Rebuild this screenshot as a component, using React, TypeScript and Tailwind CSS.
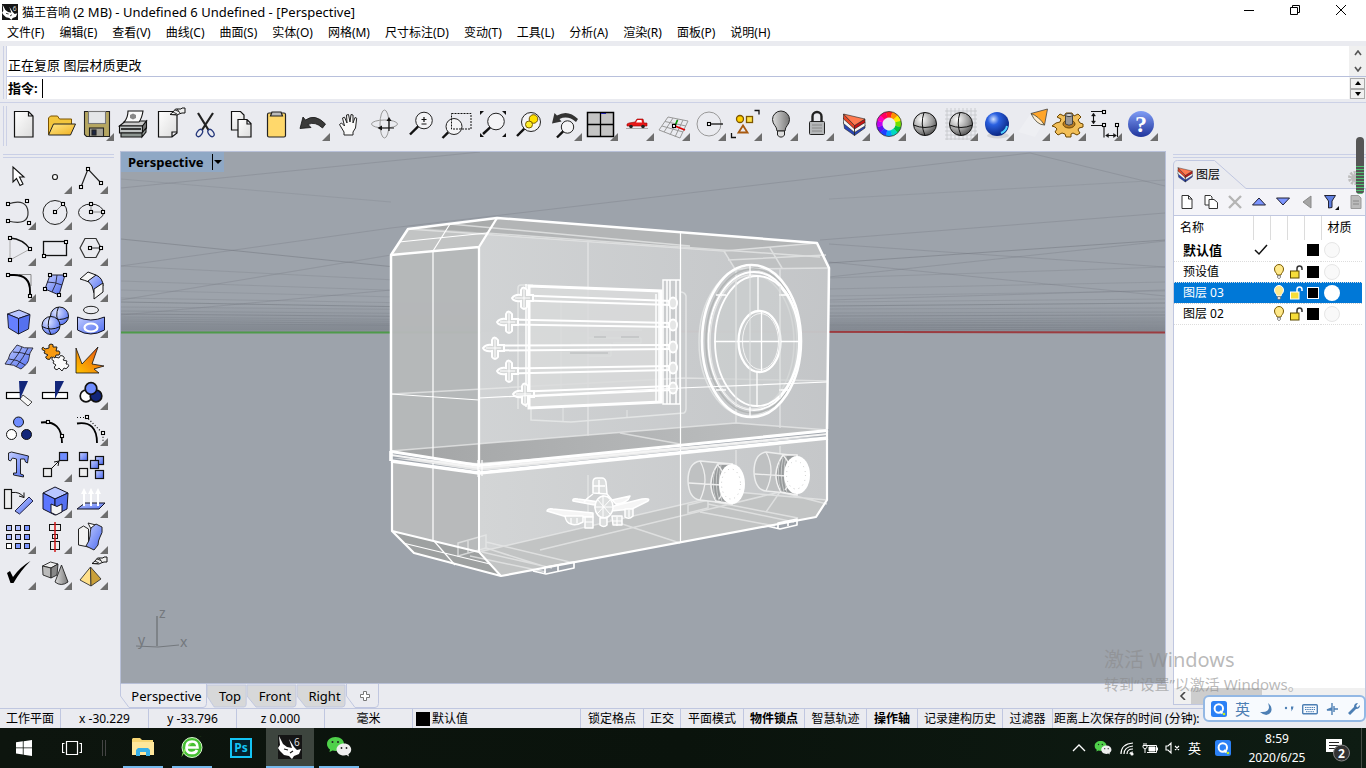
import React from "react";

const BLUE = "#6f8dff";
const NAVY = "#12267a";

type Glyph = { name: string; art: React.ReactNode; more?: boolean };

function Pt({ x, y }: { x: number; y: number }) {
  return <rect x={x - 1.5} y={y - 1.5} width="3" height="3" fill="#fff" stroke="#000" strokeWidth="1.1" />;
}

function HandMark({ x, y }: { x: number; y: number }) {
  return (
    <g transform={`translate(${x} ${y})`}>
      <path d="M0 6.500L3 4l2.500-3H11l1-1h3v5h-3L9 6 7 7z" fill="#eee" stroke="#111" strokeWidth="1" />
      <path d="M1 6.500h5M3 4l4 2M5 2l4 1.500M7 1l3 4" stroke="#222" strokeWidth=".9" fill="none" />
    </g>
  );
}

function Lens({ x, y, r, tx, ty }: { x: number; y: number; r: number; tx: number; ty: number }) {
  return (
    <g>
      <line x1={x - r * 0.7} y1={y + r * 0.7} x2={tx} y2={ty} stroke="#111" strokeWidth="2.4" />
      <circle cx={x} cy={y} r={r} fill="#f4f4f6" stroke="#222" strokeWidth="1" />
    </g>
  );
}

function Sphere({ x, y, r, fill }: { x: number; y: number; r: number; fill: string }) {
  return (
    <g fill="none" stroke="#111" strokeWidth="1">
      <circle cx={x} cy={y} r={r} fill={fill} />
      <path d={`M${x - r} ${y + 1}Q${x} ${y + 6} ${x + r} ${y + 1}M${x - 1} ${y - r}Q${x - 5} ${y} ${x} ${y + r}`} />
    </g>
  );
}

const wheelColors = ["#ff2020", "#ff9000", "#ffee00", "#70e000", "#00c040", "#00d8c0", "#00a0ff", "#2040ff", "#6010f0", "#c000f0", "#ff00c0", "#ff0060"];

const topTools: Glyph[] = [
  { name: "新建", art: <path d="M7.500 5.500h14l4.500 4.500v21H7.500zM21.500 5.500v4.500H26" fill="url(#paper)" stroke="#111" strokeWidth="1.2" /> },
  { name: "打开", art: <g stroke="#7a5200" strokeWidth="1"><path d="M5.500 28V12l2-2h7l2 3h12v5" fill="#f2c53d" /><path d="M5.500 29l5-11h22l-5 11z" fill="url(#gold)" stroke="#222" /></g> },
  { name: "保存", more: true, art: <g stroke="#222" strokeWidth="1.1"><path d="M5.500 5.500h25v25H7.500l-2-2z" fill="#b5a661" /><rect x="9.500" y="5.500" width="17" height="12" fill="#e4e6e8" stroke="#777" /><rect x="10.500" y="22" width="14" height="8.500" fill="#a5a398" /><rect x="13" y="24" width="4" height="5" fill="#1c2540" /></g> },
  { name: "打印", art: <g stroke="#111" strokeWidth="1.1"><path d="M4.500 20l6-5h21l-4 5z" fill="#ccc" /><path d="M9 16q4-4 4-11h15q-1 7-4 11z" fill="#fafafa" /><path d="M15 9l3-1.500 3 1.500v3l-3 1.500-3-1.500z" fill="#888" stroke="none" /><path d="M4.500 20h23v7h-23z" fill="#bfc3c3" /><path d="M27.500 20l4-5v7l-4 5z" fill="#777" /><path d="M6 27h21v4H6zM27 27l4-5v4l-4 5z" fill="#8c9490" /><path d="M6 23h20" strokeWidth="1.600" /></g> },
  { name: "属性", art: <g><path d="M7.500 5.500H26V27l-5 4H7.500zM26 26h-5v5" fill="url(#paper)" stroke="#111" strokeWidth="1.2" /><HandMark x={19} y={2} /></g> },
  { name: "剪切", art: <g fill="none"><path d="M11 7l10.500 17M26 7L15 24" stroke="#222" strokeWidth="2.200" /><ellipse cx="12.500" cy="27" rx="2.500" ry="4" transform="rotate(35 12.500 27)" stroke="#26387c" strokeWidth="1.300" /><ellipse cx="24" cy="27" rx="2.500" ry="4" transform="rotate(-35 24 27)" stroke="#26387c" strokeWidth="1.300" /></g> },
  { name: "复制", art: <g fill="url(#paper)" stroke="#111" strokeWidth="1.2"><path d="M8.500 5.500h9l3.500 3.500v15H8.500z" /><path d="M15 13.500h9l4 4V31H15zM24 13.500V18h4" /></g> },
  { name: "粘贴", art: <g stroke="#222" strokeWidth="1.200"><rect x="8.500" y="7" width="18" height="24" rx="1.500" fill="#ffd86b" /><path d="M13 6h9l1.500 4h-12z" fill="#bbb" /></g> },
  { name: "复原", more: true, art: <path d="M5 22.500L8 11l2.500 3Q20 7 30.500 18l-3 4Q20 15 13 18.500l3 3z" fill="#3a3a3a" stroke="#111" strokeWidth=".8" /> },
  { name: "平移", art: <path d="M13 29v-3L8.500 18.500l2-1.500 3 3L11.500 12l2-.8L16 17l-.5-8 2-.5L19 16l1-7.500 2 .5v8l2-5.500 1.700.7L24.500 22 22 26v3z" fill="#fafafa" stroke="#222" strokeWidth="1" /> },
  { name: "旋转", art: <g fill="none"><ellipse cx="17.500" cy="18" rx="13" ry="4" stroke="#999" /><ellipse cx="17.500" cy="18" rx="4.500" ry="14" stroke="#999" /><path d="M22 13v12M27 22H13" stroke="#111" strokeWidth="1.200" /><path d="M19.500 15l2.500-4 2.500 4zM15 19.500L10.500 22l4.500 2.500z" fill="#111" /></g> },
  { name: "缩放", art: <g><Lens x={21} y={14.500} r={8.300} tx={7} ty={28.500} /><path d="M18.500 13.500h5M21 11v5M18.500 18h5" stroke="#111" strokeWidth="1.200" /></g> },
  { name: "框选缩放", art: <g><Lens x={15} y={20.500} r={8} tx={3.500} ty={32} /><path d="M12.500 7.500h19.500v15.500h-19.500z" fill="none" stroke="#111" strokeDasharray="2 1" /></g> },
  { name: "缩放范围", art: <g><Lens x={21} y={15.500} r={8.300} tx={8} ty={28} /><path d="M5 5h4l-4 4zM31 5v4l-4-4zM5 31v-4l4 4zM31 31h-4l4-4z" fill="#111" /></g> },
  { name: "缩放选取", art: <g><Lens x={20} y={16} r={9.500} tx={6} ty={30} /><circle cx="22.500" cy="13" r="4.300" fill="#ffe000" stroke="#775c00" /><circle cx="18" cy="18.500" r="3.500" fill="#fff02a" stroke="#775c00" /></g> },
  { name: "复原视图", more: true, art: <g><Lens x={20.500} y={21} r={6.200} tx={10} ty={31.500} /><path d="M5 17.500L7.500 7l2.500 2.500Q21 3 31 13l-2 3Q21 9 12.500 13l2 2.500z" fill="#333" /></g> },
  { name: "四视图", more: true, art: <g><rect x="4.500" y="6.500" width="26" height="24" fill="#c4c4c4" stroke="#000" strokeWidth="1.500" /><path d="M17.500 6v25M4 18.500h27" stroke="#000" strokeWidth="1.300" /><path d="M18 7.500h5" stroke="#22a" /></g> },
  { name: "汽车视图", more: true, art: <g><path d="M7 22.500h22" stroke="#aaa" /><path d="M8 20v-2l2-1 6-1 2-3h6l1 4h3v3z" fill="#e81818" stroke="#900" strokeWidth=".6" /><path d="M18.500 14h4l.5 2.500h-6z" fill="#fff" /><circle cx="12" cy="20.500" r="1.800" fill="#222" /><circle cx="24" cy="20.500" r="1.800" fill="#222" /></g> },
  { name: "工作平面", more: true, art: <g fill="none" stroke="#999"><path d="M13 11l20 4-8 17L4 24zM10 15.500l21 4.500M7 20l21 6M18 12l-9 14M23 13l-8 16M28 14l-8 17" /><path d="M20 20l2.500-6" stroke="#0a9a0a" strokeWidth="1.700" /><path d="M20 20l10 4" stroke="#d00" strokeWidth="1.700" /><Pt x={19} y={20} /></g> },
  { name: "锁点", more: true, art: <g fill="none"><circle cx="18" cy="18" r="12" stroke="#999" /><path d="M18 18h14" stroke="#000" strokeWidth="1.200" /><Pt x={18} y={18} /></g> },
  { name: "选取", more: true, art: <g fill="none" stroke="#7d5600" strokeWidth="1.300"><circle cx="13" cy="13" r="3.500" fill="#ffd000" /><rect x="19.500" y="10.500" width="6" height="6" fill="#ffe24a" /><path d="M16 19.500l-4.500 7h9z" stroke="#a85a10" strokeWidth="1.800" /><path d="M27.500 4.500H32v4M4.500 27v4.500H9" stroke="#111" /></g> },
  { name: "隐藏", more: true, art: <g stroke="#222"><path d="M14 25c0-5-4.500-6-4.500-11.500a8.500 8.500 0 0117 0C26.500 19 22 20 22 25z" fill="url(#gray)" /><path d="M14.500 25h7v4l-2 2h-3l-2-2z" fill="#ddd" /></g> },
  { name: "锁定", more: true, art: <g stroke="#222"><path d="M13.500 16v-5.500a4.500 4.500 0 019 0V16" fill="none" strokeWidth="2.400" /><rect x="10.500" y="15.500" width="15" height="13" rx="1" fill="#b5b7b9" /><path d="M13 19h10M13 22h10M13 25h10" stroke="#888" /></g> },
  { name: "图层", more: true, art: <g stroke="#222" strokeWidth=".6"><path d="M8.500 16l11 10v3.500l-10-7zM19.500 26l10.500-7v3l-10.500 7.500z" fill="#2845b8" /><path d="M8.500 12l11 10v4.500l-11-9zM19.500 22L30 16v4l-10.500 6.500z" fill="#f4f4f4" /><path d="M8.500 8l11 11.500v3.500L8.500 13z" fill="#e84424" /><path d="M19.500 19.500L30 13v3.500L19.500 23z" fill="#c81414" /><path d="M8.500 8L30 13l-10.500 6.500z" fill="#ff7a50" /></g> },
  { name: "颜色", more: true, art: <g fill="none" strokeWidth="6">{wheelColors.map((c, i) => { const a = (i * 30 - 105) * Math.PI / 180; const b = a + 0.55; return <path key={c} stroke={c} d={`M${18 + 9.5 * Math.cos(a)} ${18 + 9.5 * Math.sin(a)}A9.500 9.500 0 0 1 ${18 + 9.5 * Math.cos(b)} ${18 + 9.5 * Math.sin(b)}`} />; })}<circle cx="18" cy="18" r="12.500" stroke="#333" strokeWidth=".8" /></g> },
  { name: "着色", art: <Sphere x={18} y={18} r={11.500} fill="url(#ball)" /> },
  { name: "着色全部", more: true, art: <g><path d="M2 5h32M2 9h32M2 13h32M2 17h32M2 21h32M2 25h32M2 29h32M2 33h32M4 2v32M8 2v32M12 2v32M16 2v32M20 2v32M24 2v32M28 2v32M32 2v32" stroke="#c4c5c9" strokeWidth=".8" /><Sphere x={18} y={18} r={11.500} fill="url(#ball)" /></g> },
  { name: "渲染", more: true, art: <g><ellipse cx="19" cy="29.500" rx="11" ry="3" fill="#d2d3d8" /><circle cx="18" cy="18" r="12" fill="url(#deep)" /><path d="M22 27q5-2 6-7" stroke="#4fd0ff" strokeWidth="2" fill="none" /></g> },
  { name: "灯光", more: true, art: <g><path d="M3 26L16 7l10 14-6 10z" fill="#fff" opacity=".2" /><path d="M16 7.500L32.500 3l-3 16z" fill="#ffa52a" stroke="#444" strokeWidth=".8" /><path d="M16 7.500q8 3 13.500 11.500-8 0-13.500-11.500z" fill="#ffeccc" stroke="#443" strokeWidth=".8" /></g> },
  { name: "选项", more: true, art: <g stroke="#6d4600" strokeWidth="1"><path d="M5 17l4-1 1-3-4-2 3-3 4 2 2-3h6l2 3 4-2 3 3-3 3 2 3 3 1v3l-4 1-1 2 2 3-3 2-4-2-2 1v3h-5l-1-3-3-1-4 2-3-3 2-3-2-2-3-1z" fill="#f2bf58" /><ellipse cx="18" cy="18" rx="6" ry="4" fill="#b87c22" /><path d="M14.500 9v9q3.500 2.500 7 0V9z" fill="#999" stroke="#444" /><ellipse cx="18" cy="9" rx="3.500" ry="1.600" fill="#ccc" stroke="#444" /></g> },
  { name: "尺寸标注", more: true, art: <g fill="none" stroke="#111" strokeWidth="1.100"><path d="M4 5.500h13M4 19.500h13v12M30.500 19v12M6.500 8v9M19 29.500h10" /><path d="M4.500 10l2-3 2 3zM4.500 15l2 3 2-3zM21.500 27.500l-3 2 3 2zM26.500 27.500l3 2-3 2z" fill="#111" strokeWidth=".4" /><Pt x={17} y={6} /><Pt x={17} y={19} /><Pt x={30} y={19} /></g> },
  { name: "说明", more: true, art: <g><circle cx="18" cy="18" r="13" fill="url(#help)" /><text x="18" y="26" textAnchor="middle" fontFamily="Liberation Serif, serif" fontWeight="700" fontSize="24" fill="#fff">?</text></g> },
];

const sideTools: Glyph[] = [
  { name: "选取", art: <path d="M12 8v15l3.500-3.500 3.500 7 3-1.500-3.500-7H23z" fill="#fff" stroke="#111" strokeWidth="1.100" /> },
  { name: "点", more: true, art: <circle cx="18" cy="18" r="2.500" fill="#fff" stroke="#222" strokeWidth="1.200" /> },
  { name: "多重直线", more: true, art: <g><path d="M8 28l7-18 13 14" fill="none" stroke="#222" strokeWidth="1.200" /><Pt x={8} y={28} /><Pt x={15} y={10} /><Pt x={28} y={24} /></g> },
  { name: "曲线", more: true, art: <g><path d="M7 9Q26 3 27 17T7 26" fill="none" stroke="#333" strokeWidth="1.200" /><Pt x={7} y={9} /><Pt x={26} y={6} /><Pt x={28} y={28} /><Pt x={7} y={26} /></g> },
  { name: "圆", more: true, art: <g><circle cx="18" cy="17.500" r="12" fill="none" stroke="#222" /><path d="M18 17l8-8" stroke="#888" /><Pt x={18} y={17} /><Pt x={26} y={9} /></g> },
  { name: "椭圆", more: true, art: <g><ellipse cx="18" cy="17.500" rx="12.500" ry="8.500" fill="none" stroke="#222" /><path d="M18 9v8h12" fill="none" stroke="#888" /><Pt x={18} y={17} /><Pt x={18} y={9} /><Pt x={30} y={17} /></g> },
  { name: "圆弧", more: true, art: <g fill="none"><path d="M9 7v22l20-11" stroke="#aaa" /><path d="M9 7q13 1 20 11" stroke="#111" strokeWidth="1.300" /><Pt x={9} y={7} /><Pt x={29} y={18} /><Pt x={9} y={29} /></g> },
  { name: "矩形", more: true, art: <g><rect x="6.500" y="10.500" width="23" height="14" fill="none" stroke="#111" strokeWidth="1.300" /><Pt x={29} y={11} /><Pt x={7} y={25} /></g> },
  { name: "多边形", more: true, art: <g><path d="M12 7.500h11L28 17l-5 9.500H12L7 17zM17 17h11" fill="none" stroke="#333" strokeWidth="1.200" /><Pt x={17} y={17} /><Pt x={28} y={17} /></g> },
  { name: "圆角", more: true, art: <g fill="none"><path d="M18 7.500h12V19" stroke="#888" /><path d="M7 8h6q16 0 16 16v5" stroke="#000" strokeWidth="1.900" /><Pt x={7} y={8} /><Pt x={29} y={29} /></g> },
  { name: "曲面", more: true, art: <g><path d="M13 8h15l-6 20-14-6z" fill="url(#blue)" stroke="#223" /><path d="M20 8q0 9-5 17M10 15q8 0 15 3" fill="none" stroke="#223" strokeWidth=".9" /><Pt x={13} y={8} /><Pt x={28} y={8} /><Pt x={22} y={28} /><Pt x={8} y={22} /></g> },
  { name: "曲面圆角", more: true, art: <g stroke="#111" strokeWidth="1"><path d="M7 12l8-7 8 3-7 7q-5-2-9-3z" fill="#f6f6f6" /><path d="M23 8q7 3 7 11l-9 7q-1-8-6-12z" fill="url(#blue)" /><path d="M21 22l9-6v9l-9 7z" fill="#f6f6f6" /></g> },
  { name: "立方体", more: true, art: <g stroke="#112" strokeWidth=".9"><path d="M6.500 11L18 7l11 4.500-11.500 4z" fill="#b9c6ff" /><path d="M6.500 11l11 4.500V31L7.500 25z" fill="#6680ff" /><path d="M17.500 15.500L29 11.500 27.500 26l-10 5z" fill="#5571ee" /></g> },
  { name: "布尔", more: true, art: <g><Sphere x={22.500} y={13} r={9} fill="url(#blueball)" /><Sphere x={14} y={22.500} r={9} fill="url(#blueball)" /></g> },
  { name: "投影", more: true, art: <g><ellipse cx="18" cy="7" rx="7.500" ry="3.700" fill="none" stroke="#222" /><path d="M4.500 14q13 6 27 0v13q-14 8-27 0z" fill="url(#blue)" stroke="#112" /><ellipse cx="18" cy="24.500" rx="6.500" ry="4" fill="none" stroke="#fff" strokeWidth="2.200" /></g> },
  { name: "网格", more: true, art: <g stroke="#223" strokeWidth=".9"><path d="M16 6q7 4 16 3-4 5-4 10t-8 11q-7-5-16-5 4-5 5-10z" fill="url(#blue)" /><path d="M21 8q-3 7-12 18M27 9q-4 9-12 19M12 13q8 0 17 3M8 20q8 0 16 6" fill="none" /></g> },
  { name: "组合", art: <g strokeWidth="1" stroke="#222"><path d="M8 10l4-1q-1-4 2-4t2 3l4 0-1 4q4-1 4 2t-4 2l-1 3-4-1q-1 4-4 2t1-4l-4-2 1-2q-4-1-3-3t3 1z" fill="#f79a10" /><path d="M18 18l4 1q1-4 4-2t0 4l4 1-1 3q4 0 2 3t-4 1l-2 3-3-3q-2 3-4 1t1-4l-3-2 1-2q-3-1-2-3t3 0z" fill="#fbfbfb" /></g> },
  { name: "炸开", art: <path d="M3 34V9L9 25 25 8l-6 17 12 2-10 3 5 4z" fill="url(#fire)" stroke="#111" strokeWidth=".8" /> },
  { name: "修剪", art: <g><rect x="5.500" y="17.500" width="14" height="6" fill="#fff" stroke="#000" strokeWidth="1.200" /><path d="M22 20l9 7-4 4-8-7z" fill="#f7f7f7" stroke="#444" /><path d="M18 6h9l-8 18z" fill={NAVY} /></g> },
  { name: "分割", art: <g><rect x="5.500" y="17.500" width="25" height="6" fill="#fff" stroke="#000" strokeWidth="1.200" /><path d="M18 6h9l-9 18z" fill={NAVY} /></g> },
  { name: "群组", more: true, art: <g stroke="#111" strokeWidth="1.700"><circle cx="13" cy="21" r="5.800" fill="#fff" /><circle cx="23" cy="21" r="5.800" fill={NAVY} /><circle cx="18" cy="13.500" r="5.800" fill={BLUE} /></g> },
  { name: "解散群组", art: <g stroke="#111" strokeWidth="1"><circle cx="17.500" cy="11" r="5" fill={BLUE} /><circle cx="10.500" cy="23.500" r="5" fill="#fff" /><circle cx="25.500" cy="23.500" r="5" fill={NAVY} /></g> },
  { name: "编辑点", art: <g><path d="M4 11.500Q25 9 25 32" fill="none" stroke="#000" strokeWidth="1.800" /><Pt x={11} y={11} /><Pt x={25} y={25} /></g> },
  { name: "控制点", more: true, art: <g><path d="M4 12.500q20-3 20 19.500" fill="none" stroke="#000" strokeWidth="1.800" /><path d="M4 6.500h10l16 16v9" fill="none" stroke="#111" strokeDasharray="1 2" strokeWidth="1.200" /><Pt x={14} y={6} /><Pt x={30} y={22} /></g> },
  { name: "文字", art: <g stroke="#111" strokeWidth=".9"><path d="M7.500 6l3-1 17 4-1 7-2-1-1-3h-4v15l3 1v2l-10-2v-2l3 0V12l-4-1-2 3-2-1z" fill="url(#blue)" /></g> },
  { name: "移动", more: true, art: <g stroke="#111" strokeWidth="1.200"><rect x="22.500" y="5.500" width="8" height="8" fill={BLUE} /><rect x="6.500" y="21.500" width="8" height="8" fill="#eee" /><path d="M15 21l7-7m-5 1l5-1-1 5" fill="none" strokeWidth="1" /></g> },
  { name: "阵列复制", art: <g stroke="#111" strokeWidth="1.200" fill="url(#blue)"><rect x="6.500" y="5.500" width="8" height="8" /><rect x="22.500" y="9.500" width="8" height="8" /><rect x="17.500" y="13.500" width="8" height="8" /><rect x="6.500" y="21.500" width="8" height="8" fill="#eee" /><rect x="22.500" y="23.500" width="8" height="8" /></g> },
  { name: "旋转", art: <g stroke="#111"><rect x="3.500" y="6.500" width="7" height="19" fill="#eee" strokeWidth="1.200" /><path d="M11 9.500q8-1 12 5m-5-1.500l5 1.500v-5" fill="none" /><path d="M14 28l14-14 4 4-13.500 13z" fill="url(#blue)" stroke="#224" /></g> },
  { name: "实体", more: true, art: <g stroke="#112" strokeWidth="1"><path d="M6 10l12-6 13 6-13 6z" fill="#b9c6ff" /><path d="M6 10l12 6v16L6 26z" fill="#5b76ff" /><path d="M18 16l13-6-1 16-12 6z" fill="#5570f0" /><path d="M14 21l6 2.500 5-2.500v8l-6 3-5-2.500z" fill="#f4f4f4" /></g> },
  { name: "拉伸", more: true, art: <g><path d="M4 26l8-6h20l-6 6z" fill="url(#blue)" stroke="#112" /><path d="M11 23V8M18 23V8M25 23V8" stroke="#fff" strokeWidth="2" /><path d="M8 11l3-6 3 6zM15 11l3-6 3 6zM22 11l3-6 3 6z" fill="#fff" /></g> },
  { name: "矩形阵列", more: true, art: <g stroke="#111">{[0, 1, 2].flatMap((r) => [0, 1, 2].map((c) => <rect key={`${r}${c}`} x={5.5 + 9 * c} y={6.5 + 9 * r} width="5" height="5" fill={r === 2 && c === 0 ? "#fff" : r === 2 || c === 2 ? "#7c95ff" : "#aebdff"} />))}</g> },
  { name: "对齐", more: true, art: <g fill="#eee" stroke="#111"><rect x="12.500" y="5.500" width="11" height="6" /><rect x="15.500" y="15.500" width="5" height="4" /><rect x="13.500" y="22.500" width="9" height="8" /><path d="M18 3v30" stroke="#d01515" strokeWidth="1.500" /></g> },
  { name: "弯曲", more: true, art: <g stroke="#222" strokeWidth="1"><path d="M5.500 10l5-3 5 3v18l-10-2z" fill="#f2f2f2" /><path d="M15 4l8 2-5 4z" fill="#fff" /><path d="M18 9l5-4 6 3q1 6-2 10-2 4-2 8l-4 5-8-4q4-6 4-10 0-4 1-8z" fill="url(#blue)" /></g> },
  { name: "检查", more: true, art: <path d="M6 18l3-2 3 6Q19 12 29.500 6 20 15 12.500 28h-3z" fill="#000" /> },
  { name: "基本几何体", more: true, art: <g stroke="#222" strokeWidth=".9"><path d="M5.500 11l8-4 7.500 2-7 4z" fill="#eee" /><path d="M5.500 11l8.500 2v10l-8-3z" fill="#bbb" /><path d="M14 13l7-4-1 11-6 3z" fill="#888" /><path d="M24.500 10L18 27q6 5 13 0z" fill="url(#gray)" /></g> },
  { name: "棱锥", more: true, art: <g><path d="M17.500 12L7 25l11 6z" fill="#ffe08a" stroke="#333" strokeWidth=".9" /><path d="M17.500 12L28 24l-10 7z" fill="#caa03a" stroke="#333" strokeWidth=".9" /><HandMark x={19} y={2} /></g> },
];

function ToolButton({ g }: { g: Glyph }) {
  return (
    <button type="button" aria-label={g.name} className="block size-9 shrink-0">
      <svg viewBox="0 0 36 36" className="size-9" aria-hidden="true">
        {g.art}
        {g.more && <path d="M27 35h8v-8z" fill="#6e6e6e" />}
      </svg>
    </button>
  );
}

function Defs() {
  return (
    <svg className="absolute size-0" aria-hidden="true">
      <defs>
        <linearGradient id="paper" x1="0" y1="0" x2="1" y2="1"><stop offset="0" stopColor="#fff" /><stop offset="1" stopColor="#dcdcdc" /></linearGradient>
        <linearGradient id="gold" x1="0" y1="0" x2="1" y2="1"><stop offset="0" stopColor="#ffe98a" /><stop offset="1" stopColor="#f0b020" /></linearGradient>
        <linearGradient id="gray" x1="0" y1="0" x2="1" y2="0"><stop offset="0" stopColor="#ddd" /><stop offset="1" stopColor="#777" /></linearGradient>
        <linearGradient id="blue" x1="0" y1="0" x2="1" y2="1"><stop offset="0" stopColor="#c3ceff" /><stop offset="1" stopColor="#4c6af0" /></linearGradient>
        <linearGradient id="fire" x1="0" y1="1" x2="1" y2="0"><stop offset="0" stopColor="#ffc400" /><stop offset="1" stopColor="#e84a10" /></linearGradient>
        <linearGradient id="help" x1="0" y1="0" x2="0" y2="1"><stop offset="0" stopColor="#7f9cf5" /><stop offset="1" stopColor="#20359c" /></linearGradient>
        <radialGradient id="ball" cx=".35" cy=".3" r=".8"><stop offset="0" stopColor="#fff" /><stop offset=".6" stopColor="#9a9a9a" /><stop offset="1" stopColor="#444" /></radialGradient>
        <radialGradient id="blueball" cx=".35" cy=".3" r=".8"><stop offset="0" stopColor="#dfe6ff" /><stop offset="1" stopColor="#4c6af0" /></radialGradient>
        <radialGradient id="deep" cx=".35" cy=".3" r=".8"><stop offset="0" stopColor="#cfe0ff" /><stop offset=".3" stopColor="#2a60e0" /><stop offset="1" stopColor="#041a70" /></radialGradient>
      </defs>
    </svg>
  );
}

function RhinoMark({ className }: { className: string }) {
  return (
    <svg viewBox="0 0 24 24" className={className} aria-hidden="true">
      <rect width="24" height="24" fill="#151515" />
      <path d="M1 1l4 8 4 3 5 1-3-9 5 8 3 3 4-1-2 5-5 2-2 3-3-3-5-1-4-4-2-3 2-3z" fill="#fff" />
      <path d="M6 14l4 1M12 18l3-2" stroke="#151515" strokeWidth="1.200" />
      <text x="16" y="11" fontSize="10" fontFamily="Noto Sans, sans-serif" fill="#ddd">6</text>
    </svg>
  );
}

function WeChat({ className }: { className: string }) {
  return (
    <svg viewBox="0 0 26 22" className={className} aria-hidden="true">
      <path d="M9.500 1C4.500 1 1 4 1 8c0 2.300 1.200 4.200 3 5.500L3.500 16l3-1.500c1 .3 2 .5 3 .5 5 0 8.500-3 8.500-7s-3.500-7-8.500-7z" fill="#4fd04a" />
      <path d="M18 7.500c-4.300 0-7.500 2.700-7.500 6s3.200 6 7.500 6c.8 0 1.700-.1 2.500-.4L23 20.500l-.6-2.300c1.800-1.100 2.800-2.800 2.800-4.700 0-3.300-3-6-7.200-6z" fill="#eee" />
      <g fill="#222"><circle cx="6.500" cy="6" r="1" /><circle cx="12" cy="6" r="1" /><circle cx="15.500" cy="12" r=".9" /><circle cx="20.500" cy="12" r=".9" /></g>
    </svg>
  );
}

function QMark({ className }: { className: string }) {
  return (
    <svg viewBox="0 0 16 16" className={className} aria-hidden="true">
      <rect width="16" height="16" rx="2.500" fill="#2b80f5" />
      <circle cx="7.800" cy="7.500" r="4.200" fill="none" stroke="#fff" strokeWidth="2" />
      <path d="M9 10l2.500 2.500" stroke="#fff" strokeWidth="1.800" />
      <circle cx="13" cy="13" r="1.300" fill="#c5f020" />
    </svg>
  );
}

const gridRows: [number, number, number][] = [
  [179, 189, 0.25], [239, 251, 0.6], [266, 272, 0.3], [281, 285, 0.3], [290, 293, 0.25], [298, 300, 0.3], [302, 304, 0.65],
  [307, 308, 0.3], [311, 312, 0.35], [314, 315, 0.6], [317, 318, 0.35], [319, 320, 0.35], [321, 322, 0.5], [323, 324, 0.4], [325, 325, 0.5], [327, 327, 0.6], [329, 329, 0.6],
];

const strings = [
  { x: 524, y: 298, e: 303 },
  { x: 509, y: 322, e: 325 },
  { x: 495, y: 348, e: 347 },
  { x: 509, y: 371, e: 368 },
  { x: 525, y: 394, e: 388 },
];

const knobs = [
  { x: 732, y: 484, b: 700, ry: 20 },
  { x: 797, y: 475, b: 766, ry: 19 },
];

function Scene() {
  return (
    <svg viewBox="121 152 1044 531" preserveAspectRatio="xMidYMid slice" className="absolute inset-0 size-full" aria-label="Perspective 视图">
      <defs>
        <linearGradient id="haze" x1="0" y1="0" x2="0" y2="1"><stop offset="0" stopColor="#80868f" stopOpacity="0" /><stop offset="1" stopColor="#777d86" stopOpacity=".6" /></linearGradient>
        <linearGradient id="front" x1="0" y1="0" x2="1" y2="0"><stop offset="0" stopColor="#d3d5d6" /><stop offset="1" stopColor="#c5c7c9" /></linearGradient>
        <linearGradient id="shelf" x1="0" y1="0" x2="1" y2="0"><stop offset="0" stopColor="#a2a4a5" /><stop offset="1" stopColor="#c0c2c3" /></linearGradient>
      </defs>
      <rect x="121" y="152" width="1044" height="531" fill="#9da3ab" />
      <g fill="none" stroke="#70757d" strokeWidth="1">
        {gridRows.map(([a, b, o], i) => <path key={i} opacity={o * 0.8} d={`M121 ${a}L391 ${b + (b - a) * 1.3}M829 ${b + (b - a)}L1165 ${a + 1}`} />)}
        <path opacity=".3" d="M121 266L391 228L1030 153L1165 186M121 188L480 152M1165 213L820 240M121 300L391 255M829 277L1165 241M121 315L391 290M829 262L1165 296M829 300L1165 290M829 244L1165 267" />
      </g>
      <path d="M121 302h1044v30H121z" fill="url(#haze)" />
      <path d="M121 332.500h360" stroke="#4e9a4a" strokeWidth="2" />
      <path d="M680 331.500l485 1" stroke="#9b3c40" strokeWidth="2" />

      <g strokeLinejoin="round">
        <path d="M479 247l18-29 320 25 12 25-1 161-349 35z" fill="url(#front)" fillOpacity=".96" />
        <path d="M408 229l89-11 320 25-93 8z" fill="#b3b5b6" />
        <path d="M391 255l88-8v217l-88-13z" fill="#b6b8b9" fillOpacity=".96" />
        <path d="M391 255l17-26 89-11-18 29z" fill="#c2c4c4" />
        <path d="M420 228l77-10-8 15z" fill="#a9abab" />
        <path d="M724 251l93-8 12 25-94 1z" fill="#bfc1c2" />
        <path d="M391 451l345-28 92 7-349 34z" fill="url(#shelf)" />
        <path d="M392 462l87 12v78l-87-21z" fill="#b8babb" />
        <path d="M479 474l348-36v62l-11 17-315 59-22-24z" fill="url(#front)" />
        <path d="M392 531l87 21 22 24-87-23z" fill="#9ea1a1" />
        <path d="M479 552l257-60 91 8-11 17-315 59z" fill="#c2c4c4" />
        <path d="M393 458l86 13 348-35-349 27z" fill="#e6e7e7" />
      </g>

      <g fill="none" stroke="#e8e9e9" strokeWidth="1.500" opacity=".75">
        <path d="M408 229l316 22 93-8M724 251l11 18 94-1M728 260l98-5M770 248l12 20M736 269v154M780 268v160M588 241v195M588 475v45" />
        <path d="M391 394l293-16 144 3M450 224l240 22M486 233l334 24M391 451l345-28 92 7M620 433l60 11" />
        <path d="M540 550l240-58 47 12M479 552l257-60 91 8M610 520l70 23M736 450v42M780 446v46l-14 20" />
        <path d="M458 543l28-8v13l-28 8zM468 541v12M486 542l88 21M486 548l60 19M470 556l76 16M482 552l70 16" />
        <path d="M688 505l20-5v8l-20 5zM708 504l86 18M700 512l75 14M715 502l83 16" />
      </g>

      <g fill="none" stroke="#e3e5e5" strokeWidth="1.500">
        <path d="M518 409V288q0-3 3-3h12M531 409v11l40 2 113-9q2-1 2-4V296q-1-4-6-4" />
        <path d="M563 408v14M627 410v8M561 300v100M571 344h40v12h-22M588 338h53v5h-28M600 330h42" strokeWidth="1" />
      </g>
      <path d="M529 288l132 4v110l-132 7z" fill="#d9dbdb" fillOpacity=".8" />
      <path d="M570 353h38M621 337h18M594 337h12" stroke="#b4b7b8" strokeWidth="1" />
      <g fill="none" stroke="#fff">
        <path d="M529 286l132 5v111l-132 6z" strokeWidth="3" />
        <path d="M526 284v123M656 294v107M659 292v109" strokeWidth="1.500" />
        <path d="M663 280h17v124h-17zM667 280v124M670 280v124M676 280v124" strokeWidth="1.500" />
        {strings.map((s) => (
          <g key={s.y}>
            <path d={`M${s.x} ${s.y - 2.5}L672 ${s.e - 2}M${s.x} ${s.y + 2.5}L672 ${s.e + 2}`} strokeWidth="2" />
            <ellipse cx="673" cy={s.e} rx="4" ry="5.500" strokeWidth="2" fill="#e5e6e6" />
            <path d={`M${s.x - 12} ${s.y}q3-4 9-3v-5q2-5 6 0v5h6v6h-6v6q-3 4-6 0v-6q-7 1-9-3z`} fill="#d5d7d7" strokeWidth="2" />
            <path d={`M${s.x} ${s.y - 10}v20M${s.x - 9} ${s.y}h15`} strokeWidth="1" />
          </g>
        ))}
      </g>

      <g fill="none">
        <ellipse cx="748" cy="342" rx="49" ry="74" stroke="#dfe1e1" strokeWidth="1.500" />
        <ellipse cx="753" cy="341" rx="47" ry="72" stroke="#b2b5b5" strokeWidth="1.500" />
        <ellipse cx="751.500" cy="341" rx="49.500" ry="76" stroke="#fff" strokeWidth="2.600" />
        <ellipse cx="754" cy="341" rx="45.500" ry="69" stroke="#fff" strokeWidth="2" />
        <ellipse cx="752" cy="342" rx="42" ry="67" stroke="#e4e5e5" strokeWidth="1.500" />
        <ellipse cx="757" cy="341" rx="42" ry="65" stroke="#fff" strokeWidth="1.800" fill="#ccd0d0" fillOpacity=".65" />
        <ellipse cx="759.500" cy="341.500" rx="21" ry="30.500" stroke="#fff" strokeWidth="2.300" />
        <ellipse cx="760.500" cy="341.500" rx="18" ry="28" stroke="#f5f5f5" strokeWidth="1" />
        <path d="M714 341.500h86M761.500 311v61M758 276v35M757 372v35M750 266v10M750 407v10M716 295h10M779 295h10M716 390h10M779 390h10" stroke="#fff" strokeWidth="1.300" />
        <path d="M750 276v131M736 282v118M780 286v112" stroke="#e3e5e5" strokeWidth="1" />
      </g>

      <g fill="none" stroke="#fff" strokeLinejoin="round">
        <path d="M391 451V255l17-26 89-11 320 25 12 25-2 161" strokeWidth="2.500" />
        <path d="M391 255l88-8 18-29M479 247v217" strokeWidth="2.300" />
        <path d="M399 242l88-9M433 251l17-27M433 251v206M391 394l88 6M479 398l201-10 147-6M680.500 232v311" strokeWidth="1.200" />
        <path d="M391 451.500l88 14 349-35" strokeWidth="3" />
        <path d="M391 455l88 13 349-34" strokeWidth="2" stroke="#f4f4f4" />
        <path d="M391 461l88 12 349-35M391 451v10" strokeWidth="3.600" />
        <path d="M392 461v70l22 22 87 23 315-59 11-17v-70" strokeWidth="2.200" />
        <path d="M392 531l87 21 22 24M479 470v82" strokeWidth="2" />
        <path d="M403 543l87 21M434 541l21 24M433 463v78M478 460v17M482 460v16" strokeWidth="1.200" />
        <path d="M533 571l13 3 28-6v-6l-29 5v6M558 566v5M767 526l13 3 17-4v-6l-19 4v5M788 522v4" strokeWidth="1.700" />
      </g>

      {knobs.map((k) => (
        <g key={k.b}>
          <path d={`M${k.b} ${k.y - 23}L${k.x} ${k.y - k.ry}v${2 * k.ry}L${k.b} ${k.y + 16}q-11-1-12-19 0-18 12-20z`} fill="#bfc1c2" stroke="#eceded" strokeWidth="1.500" />
          <path d={`M${k.x - 14} ${k.y - 20}h14v40l-16-3q-11-18 2-37z`} fill="#989b9c" stroke="#f2f2f2" strokeWidth="1.500" />
          <path d={`M${k.x - 17} ${k.y - 14}q-4 14 1 30M${k.x - 14} ${k.y - 17}q-4 16 1 34M${k.x - 11} ${k.y - 19}q-4 17 1 37`} fill="none" stroke="#c9cbcb" strokeWidth="1" />
          <path d={`M${k.b - 11} ${k.y - 1}l32 2M${k.b} ${k.y - 23}q10 18 0 39M${k.b + 17} ${k.y - 20}q16 18 2 35`} fill="none" stroke="#eee" strokeWidth="1.300" />
          <ellipse cx={k.x} cy={k.y} rx="13" ry={k.ry} fill="#fff" />
          <ellipse cx={k.x - 1} cy={k.y} rx="9.500" ry={k.ry - 5} fill="none" stroke="#c9caca" strokeWidth="1" strokeDasharray="1 4" />
        </g>
      ))}

      <g stroke="#fff" fill="#dcdede" strokeLinejoin="round" strokeWidth="1.500">
        <path d="M593 493v-11q0-4 4-4h5q3 0 4 4l1 12zM599 480v13M593 486h12" />
        <path d="M547 511q1-3 6-2l40 4v4h-26zM573 501q-1-3 5-2l22 3v4zM612 500l18-4q-2 7-14 8zM610 507l32-8q9-1 6 2l-16 8-21 2z" fill="#f5f5f5" />
        <path d="M593 494q-6 4-9 8M607 494l5 6" fill="none" />
        <ellipse cx="604" cy="507" rx="9" ry="11" />
        <path d="M594 507h19M603 495v22M597 499l13 15M611 499l-14 15" fill="none" strokeWidth="1" />
        <path d="M565 516h18v6q-7 4-12 2-5-1-6-8zM585 517h8v11h-8zM600 518h7v7q-3 3-7 0zM612 516h10v9h-9zM625 509h8v7q-4 4-8 1z" />
        <path d="M571 518v6M577 518v5M585 522h8M613 521h9M617 517v9M629 510v7" fill="none" strokeWidth="1.200" />
      </g>

      <g stroke="#74787d" strokeWidth="1.500" fill="none"><path d="M157 616v30" /><path d="M136 646l22 1 21-2" strokeWidth="1" /></g>
      <g fill="#74787d" fontFamily="Noto Sans, sans-serif" fontSize="14"><text x="159" y="618">z</text><text x="138" y="645">y</text><text x="180" y="647">x</text></g>
    </svg>
  );
}

const menus = ["文件(F)", "编辑(E)", "查看(V)", "曲线(C)", "曲面(S)", "实体(O)", "网格(M)", "尺寸标注(D)", "变动(T)", "工具(L)", "分析(A)", "渲染(R)", "面板(P)", "说明(H)"];

const layers = [
  { name: "默认值", current: true, selected: false },
  { name: "预设值", current: false, selected: false },
  { name: "图层 03", current: false, selected: true },
  { name: "图层 02", current: false, selected: false },
];

function LayerBulb({ light }: { light: boolean }) {
  return (
    <svg viewBox="0 0 16 16" className="mx-auto size-4" aria-hidden="true">
      <path d="M6 11c0-2-2.500-2.500-2.500-6a4.500 4.500 0 019 0c0 3.500-2.500 4-2.500 6z" fill="#ffe98a" stroke={light ? "#fff" : "#7a5a00"} />
      <path d="M6.500 11.500h3v2l-1 1h-1l-1-1z" fill="#ddd" stroke="#666" strokeWidth=".7" />
    </svg>
  );
}

function LayerLock({ light }: { light: boolean }) {
  return (
    <svg viewBox="0 0 16 16" className="mx-auto size-4" aria-hidden="true">
      <path d="M9 7V4.500a2.500 2.500 0 015 0V6" fill="none" stroke={light ? "#fff" : "#333"} strokeWidth="1.500" />
      <rect x="2.500" y="7" width="8.500" height="7" fill="#f6dd3a" stroke={light ? "#fff" : "#5d4a00"} />
    </svg>
  );
}

const panelTools: Glyph[] = [
  { name: "新图层", art: <path d="M3 1.500h6.500L13 5v9.500H3zM9.500 1.500V5H13" fill="#fff" stroke="#333" /> },
  { name: "新子图层", art: <g fill="#fff" stroke="#333"><path d="M2 1.500h5.500L9 3v8H2z" /><path d="M6 5.500h5l3.500 3v6H6z" /></g> },
  { name: "删除", art: <path d="M2 2l12 12M14 2L2 14" stroke="#b5b5b5" strokeWidth="2.400" /> },
  { name: "上移", art: <path d="M1.500 11L8 4l6.500 7z" fill="#7c95ff" stroke="#223" /> },
  { name: "下移", art: <path d="M1.500 4h13L8 11z" fill="#7c95ff" stroke="#223" /> },
  { name: "上一级", art: <path d="M12 2v12L4 8z" fill="#a5a5a5" stroke="#8a8a8a" /> },
  { name: "过滤", art: <g><path d="M1.500 1.500h11L9 7v6.500l-3.500.5V7z" fill="#5f7fe0" stroke="#223" /><path d="M16 12v4h-4z" fill="#111" /></g> },
  { name: "选项", art: <g><path d="M4 1.500h7.500L14 4v10.500H4z" fill="#bbb" stroke="#999" /><path d="M6 7h6M6 10h6" stroke="#888" /></g> },
];

function LayersPanel() {
  return (
    <aside className="flex w-[193px] shrink-0 flex-col">
      <div className="mt-0.5 h-1 border-y border-[#c9cfe6]" />
      <div className="mt-0.5 flex h-[29px] shrink-0 items-end">
        <h2 className="relative flex h-[29px] w-[73px] items-center gap-1 pl-1">
          <svg viewBox="0 0 73 29" className="absolute inset-0 size-full" fill="none" aria-hidden="true"><path d="M.5 29V5q0-4.500 4-4.500h37L73 28.500" stroke="#c0c7e0" /></svg>
          <svg viewBox="7 7 24 24" className="relative size-4" aria-hidden="true">{topTools[23].art}</svg>
          <span className="relative -ml-px">图层</span>
        </h2>
        <div className="flex h-full flex-1 items-center justify-end border-b border-[#c0c7e0] pr-1">
          <svg viewBox="0 0 14 14" className="mt-2 size-3.5" aria-hidden="true"><circle cx="7" cy="7" r="5.500" fill="none" stroke="#bdbdbd" strokeWidth="3" strokeDasharray="2.200 1.200" /><circle cx="7" cy="7" r="4" fill="#bdbdbd" /></svg>
        </div>
      </div>
      <div className="flex min-h-0 flex-1 flex-col border-x border-b border-[#c0c7e0]">
        <div className="flex h-[27px] shrink-0 items-center gap-2 overflow-hidden border-b border-[#c0c7e0] bg-[#f4f4f8] pl-[5px]">
          {panelTools.map((t) => (
            <button key={t.name} type="button" aria-label={t.name} className="size-4 shrink-0"><svg viewBox="0 0 16 16" className="size-4" aria-hidden="true">{t.art}</svg></button>
          ))}
        </div>
        <div className="min-h-0 flex-1 bg-white pr-[3px]">
          <table className="w-full table-fixed border-collapse">
            <colgroup><col className="w-[79px]" /><col className="w-[17px]" /><col className="w-[17px]" /><col className="w-[17px]" /><col className="w-[17px]" /><col /></colgroup>
            <thead>
              <tr className="h-[24px]">
                <th className="border-r border-[#dcdcdc] pl-1.5 text-left font-normal">名称</th>
                <td className="border-r border-[#dcdcdc]" /><td className="border-r border-[#dcdcdc]" /><td className="border-r border-[#dcdcdc]" /><td className="border-r border-[#dcdcdc]" />
                <th className="pl-1.5 text-left font-normal">材质</th>
              </tr>
            </thead>
            <tbody>
              {layers.map((l) => (
                <tr key={l.name} className={l.selected ? "h-[21px] border-b border-dotted border-[#ccc] bg-[#0078d7] text-white" : "h-[21px] border-b border-dotted border-[#ddd]"}>
                  <td className={l.current ? "pl-[9px] text-[13px] font-bold" : "pl-[9px]"}>{l.name}</td>
                  <td>{l.current && <svg viewBox="0 0 16 16" className="size-4" fill="none" aria-label="当前"><path d="M2 8l4 4 8-9" stroke="#111" strokeWidth="1.500" /></svg>}</td>
                  <td>{!l.current && <LayerBulb light={l.selected} />}</td>
                  <td>{!l.current && <LayerLock light={l.selected} />}</td>
                  <td><div className={l.selected ? "mx-auto size-3 border border-white bg-black" : "mx-auto size-3 bg-black"} /></td>
                  <td className="pl-[3px]"><div className={l.selected ? "size-4 rounded-full bg-white" : "size-4 rounded-full border border-[#e6e6e6] bg-[#f9f9f9]"} /></td>
                </tr>
              ))}
            </tbody>
          </table>
        </div>
        <div className="flex h-4 shrink-0 items-center bg-[#f0f0f0]">
          <button type="button" aria-label="向左" className="grid h-4 w-[17px] place-items-center"><svg viewBox="0 0 8 8" className="size-2" fill="none"><path d="M6 0L2 4l4 4" stroke="#444" strokeWidth="1.600" /></svg></button>
          <div className="h-4 w-[71px] bg-[#cdcdcd]" />
        </div>
      </div>
    </aside>
  );
}

const modes = [
  { t: "锁定格点", c: "w-[63px]", on: false }, { t: "正交", c: "w-[37px]", on: false }, { t: "平面模式", c: "w-[63px]", on: false }, { t: "物件锁点", c: "w-[61px]", on: true },
  { t: "智慧轨迹", c: "w-[62px]", on: false }, { t: "操作轴", c: "w-[51px]", on: true }, { t: "记录建构历史", c: "w-[85px]", on: false }, { t: "过滤器", c: "w-[50px]", on: false },
];

function StatusBar() {
  const cell = "shrink-0 border-r border-[#c0c7e0] flex items-center justify-center";
  return (
    <footer className="flex h-5 shrink-0 items-stretch overflow-hidden border-t border-[#c0c7e0] whitespace-nowrap">
      <button type="button" className={`${cell} w-[61px]`}>工作平面</button>
      <div className={`${cell} w-[88px]`}>x -30.229</div>
      <div className={`${cell} w-[88px]`}>y -33.796</div>
      <div className={`${cell} w-[88px]`}>z 0.000</div>
      <div className={`${cell} w-[88px]`}>毫米</div>
      <button type="button" className="flex w-[168px] shrink-0 items-center gap-0.5 border-r border-[#c0c7e0] pl-[3px]"><span className="size-3.5 bg-black" />默认值</button>
      {modes.map((m) => <button key={m.t} type="button" aria-pressed={m.on} className={`${cell} ${m.c} ${m.on ? "font-bold" : ""}`}>{m.t}</button>)}
      <div className="flex items-center pl-px">距离上次保存的时间 (分钟):</div>
    </footer>
  );
}

function ViewTabs() {
  return (
    <nav className="flex h-6 shrink-0 items-stretch text-[13px]" aria-label="视图">
      <button type="button" className="relative w-[87px] shrink-0">
        <svg viewBox="0 0 87 24" preserveAspectRatio="none" className="absolute inset-0 size-full" fill="none" aria-hidden="true"><path d="M.5 0v12L9 23.500h74q3.500 0 3.500-4V0" stroke="#c0c7e0" /></svg>
        <span className="relative pl-1.5">Perspective</span>
      </button>
      {[["Top", "w-[40px]"], ["Front", "w-[50px]"], ["Right", "w-[49px]"]].map(([t, w]) => (
        <button key={t} type="button" className={`relative shrink-0 ${w}`}>
          <svg viewBox="0 0 50 24" preserveAspectRatio="none" className="absolute inset-0 size-full" aria-hidden="true"><path d="M0 1h49v19q0 3-3 3H9L0 12z" fill="#d7d8d9" stroke="#c0c7e0" /></svg>
          <span className="relative pl-1.5">{t}</span>
        </button>
      ))}
      <button type="button" aria-label="新建视图" className="relative grid w-[33px] place-items-center pl-1">
        <svg viewBox="0 0 33 24" className="absolute inset-0 size-full" fill="none" aria-hidden="true"><path d="M.5 0v12L9 23.500h20q3.500 0 3.500-4V0" stroke="#c0c7e0" /></svg>
        <svg viewBox="0 0 10 10" className="relative size-2.5"><path d="M3.500.5h3v3h3v3h-3v3h-3v-3h-3v-3h3z" fill="#fff" stroke="#777" /></svg>
      </button>
    </nav>
  );
}

function TaskItem({ name, open, active, children }: { name: string; open?: boolean; active?: boolean; children: React.ReactNode }) {
  return (
    <button type="button" aria-label={name} className={active ? "flex h-10 w-12 flex-col items-center bg-[#3d453e]" : "flex h-10 w-12 flex-col items-center"}>
      <span className="flex flex-1 items-center">{children}</span>
      {open && <span className={active ? "h-0.5 w-12 bg-[#76b9ed]" : "h-0.5 w-10 bg-[#76b9ed]"} />}
    </button>
  );
}

function Taskbar() {
  return (
    <div className="flex h-10 shrink-0 items-center bg-linear-to-r from-[#0d150e] via-[#0a130c] to-[#0e1c13] text-white">
      <TaskItem name="开始"><svg viewBox="0 0 16 16" className="size-4" fill="#fff"><path d="M0 2.300L6.800 1.300v6.200H0zM7.600 1.200L16 0v7.500H7.600zM0 8.300h6.800v6.300L0 13.600zM7.600 8.300H16V16l-8.400-1.200z" /></svg></TaskItem>
      <TaskItem name="任务视图"><svg viewBox="0 0 20 16" className="h-4 w-5" fill="none" stroke="#fff" strokeWidth="1.200"><path d="M4.500 1.500h11v13h-11zM2.500 3.500h-2v9h2M17.500 3.500h2v9h-2" /></svg></TaskItem>
      <div className="flex w-[23px] gap-0.5 pl-1.5"><span className="h-4 w-px bg-[#444]" /><span className="h-4 w-px bg-[#444]" /></div>
      <div className="flex gap-px">
        <TaskItem name="文件资源管理器" open><svg viewBox="0 0 22 18" className="h-[18px] w-[22px]"><path d="M1 0h7l2 2h11v15H0V1z" fill="#f8d775" /><path d="M0 4h22v13H0z" fill="#ffe79b" /><path d="M4 18v-6l2-2h10l2 2v6h-4v-4H8v4z" fill="#38b0e8" /></svg></TaskItem>
        <TaskItem name="浏览器" open><svg viewBox="0 0 24 24" className="size-6"><circle cx="12" cy="12.500" r="10" fill="#46bf32" stroke="#d9f5cf" /><path d="M1.500 22q1-8 9-14T22 1q-6 2-11 8T1.500 22z" fill="#8ae45c" /><path d="M7 12.500h10.500q0-6-5.500-6t-5.500 6 5.500 5.500q4 0 5-3" fill="none" stroke="#fff" strokeWidth="2.600" /></svg></TaskItem>
        <TaskItem name="Photoshop"><span className="grid h-5 w-[22px] place-items-center border-2 border-[#14c4f5] bg-[#04202c] text-xs leading-4 font-bold text-[#14c4f5]">Ps</span></TaskItem>
        <TaskItem name="Rhino" open active><RhinoMark className="size-6" /></TaskItem>
        <TaskItem name="微信" open><WeChat className="h-[22px] w-[26px]" /></TaskItem>
      </div>
      <div className="ml-auto flex h-full items-center">
        <div className="flex items-center gap-[7px]">
          <svg viewBox="0 0 16 16" className="size-4" fill="none"><path d="M2 11l6-6 6 6" stroke="#fff" strokeWidth="1.300" /></svg>
          <WeChat className="h-4 w-[18px]" />
          <svg viewBox="0 0 16 16" className="size-4" fill="none" stroke="#fff" strokeWidth="1.200"><path d="M2 14Q2 4 14 3M5 14q0-7 9-8M8 14q0-5 6-5M11 14q0-2 3-2" /><circle cx="13" cy="14" r="1" fill="#fff" /></svg>
          <svg viewBox="0 0 16 16" className="size-4" fill="none" stroke="#fff"><path d="M5 5.500h9.500v7H5M15.500 7.500v3M1 5.500h4v2L3 9 1 7.500zM2 3v2M4 3v2M3 9v4" /><path d="M7 7h6v4H7z" fill="#fff" /></svg>
          <svg viewBox="0 0 16 16" className="size-4" fill="none" stroke="#fff"><path d="M1 6v4h2l3 3V3L3 6zM10 6l4 4M14 6l-4 4" strokeWidth="1.100" /></svg>
          <span className="text-[13px]">英</span>
        </div>
        <QMark className="ml-3.5 size-4" />
        <div className="ml-3.5 w-[64px] text-center text-xs leading-[19px]"><div>8:59</div><div>2020/6/25</div></div>
        <button type="button" aria-label="通知" className="relative ml-4 size-7">
          <svg viewBox="0 0 28 28" className="size-7"><path d="M1 5h16v13h-5l-3 3v-3H1z" fill="#fff" /><path d="M4 8.500h10M4 11.500h10M4 14.500h6" stroke="#222" /><circle cx="16.500" cy="19" r="8" fill="#333" stroke="#888" /><text x="16.500" y="23.500" textAnchor="middle" fontSize="12" fontWeight="700" fontFamily="Noto Sans, sans-serif" fill="#fff">2</text></svg>
        </button>
        <span className="ml-2 mr-1 h-10 w-px bg-[#444c45]" />
      </div>
    </div>
  );
}

function ImeBar() {
  return (
    <div className="absolute right-0 bottom-[46px] flex h-[27px] w-[163px] items-center gap-3 rounded-md border-2 border-[#93b8e4] bg-[#f7fafe] pl-1.5 text-[#4d7fb4]">
      <QMark className="size-4" />
      <span className="-ml-1 text-[15px]">英</span>
      <svg viewBox="0 0 12 12" className="-ml-0.5 size-3"><path d="M8 0q4 10-8 9 7 6 11 0 2-5-3-9z" fill="#4d7fb4" /></svg>
      <svg viewBox="0 0 10 10" className="size-2.5"><circle cx="2" cy="4" r="1.200" fill="#4d7fb4" /><path d="M7 2.500h2.500q0 3-2.500 5 1-2 0-3z" fill="#4d7fb4" /></svg>
      <svg viewBox="0 0 16 12" className="-ml-1 h-3 w-4"><rect x=".7" y="1.700" width="14.600" height="9" rx="1" fill="none" stroke="#4d7fb4" strokeWidth="1.400" /><path d="M3 4.500h10M3 6.500h10M4 8.700h8" stroke="#4d7fb4" strokeDasharray="1.500 .7" /></svg>
      <svg viewBox="0 0 12 12" className="-ml-1 size-3" fill="none" stroke="#4d7fb4" strokeWidth="1.400"><path d="M6 0v12M6 5L1 7h5M8 3v6M8 6h4" /></svg>
      <svg viewBox="0 0 12 12" className="-ml-0.5 size-3"><path d="M0 10l6-6q0-4 4-4L8 3l1.500 1.500L12 2q0 4-4 4l-6 6z" fill="#4d7fb4" /></svg>
    </div>
  );
}

export default function App() {
  return (
    <div className="relative flex min-h-screen flex-col overflow-hidden bg-[#eaebf0] font-['Noto_Sans','Noto_Sans_CJK_SC',sans-serif] text-xs leading-4 text-black">
      <Defs />
      <header className="bg-white">
        <div className="flex h-[24px] items-center pl-0.5">
          <RhinoMark className="mr-1 size-4" />
          <h1>猫王音响 <span className="text-[13px]">(2 MB) - Undefined 6 Undefined - [Perspective]</span></h1>
          <div className="mr-0.5 ml-auto flex pb-1">
            <button type="button" aria-label="最小化" className="grid h-5 w-[46px] place-items-center"><svg viewBox="0 0 12 12" className="size-3" stroke="#000"><path d="M1 6.500h10" /></svg></button>
            <button type="button" aria-label="还原" className="grid h-5 w-[46px] place-items-center"><svg viewBox="0 0 12 12" className="size-3" fill="none" stroke="#000"><path d="M1.500 3.500h7v7h-7zM3.500 3V1.500h7v7H9" /></svg></button>
            <button type="button" aria-label="关闭" className="grid h-5 w-[46px] place-items-center"><svg viewBox="0 0 12 12" className="size-3" stroke="#000"><path d="M1 1l10 10M11 1L1 11" /></svg></button>
          </div>
        </div>
        <nav className="flex h-[17px] items-center gap-[15px] pl-[7px]" aria-label="菜单">
          {menus.map((m) => <button key={m} type="button" className="whitespace-nowrap">{m}</button>)}
        </nav>
      </header>

      <section className="mt-[5px] flex h-[57px] shrink-0 border-b border-[#ccd1e6] pb-[3px] pl-[3px]">
        <div className="w-1 border-x border-[#ccd1e6]" />
        <div className="flex flex-1 flex-col bg-white text-[13px]">
          <p className="flex h-[31px] items-end border-b border-[#b8c0dc] px-px pb-[3px]">正在复原 图层材质更改</p>
          <div className="flex flex-1 items-center pl-px">
            <label htmlFor="command" className="font-bold">指令:</label>
            <input id="command" className="ml-1 h-[19px] flex-1 border-l border-black bg-transparent outline-none" />
          </div>
        </div>
        <div className="flex w-[17px] flex-col bg-[#f0f0f0]">
          <div className="flex h-[31px] flex-col items-center justify-between border-b border-[#b8c0dc] py-1">
            <svg viewBox="0 0 8 6" className="h-1.5 w-2" fill="none"><path d="M1 5l3-4 3 4" stroke="#555" strokeWidth="1.600" /></svg>
            <svg viewBox="0 0 8 6" className="h-1.5 w-2" fill="none"><path d="M1 1l3 4 3-4" stroke="#555" strokeWidth="1.600" /></svg>
          </div>
          <button type="button" aria-label="上一条" className="mx-px mt-px grid flex-1 place-items-center border border-[#aaa]"><svg viewBox="0 0 6 4" className="h-1 w-1.5"><path d="M0 4l3-4 3 4z" /></svg></button>
          <button type="button" aria-label="下一条" className="mx-px grid flex-1 place-items-center border border-[#aaa]"><svg viewBox="0 0 6 4" className="h-1 w-1.5"><path d="M0 0h6L3 4z" /></svg></button>
        </div>
      </section>

      <div className="flex h-[48px] shrink-0 pt-[3px] pl-[3px]">
        <div className="h-10 w-1 shrink-0 border-x border-[#ccd1e6]" />
        {topTools.map((g) => <ToolButton key={g.name} g={g} />)}
      </div>

      <div className="flex min-h-0 flex-1">
        <div className="w-[120px] shrink-0 pt-[3px]">
          <div className="mr-1.5 mb-px ml-[3px] h-1 border-y border-[#c9cfe6]" />
          <div className="grid grid-cols-[36px_36px_36px] pl-px">
            {sideTools.map((g) => <ToolButton key={g.name} g={g} />)}
          </div>
        </div>
        <main className="flex min-w-0 flex-1 flex-col">
          <div className="relative flex-1 overflow-hidden border border-[#b8c0d8]">
            <Scene />
            <button type="button" className="absolute top-0 left-0 flex h-5 items-center bg-[#8fa8c5] pl-[7px] text-[13px] font-bold">
              Perspective
              <span className="ml-2 grid h-4 w-3 place-items-center border-l border-black"><svg viewBox="0 0 8 4" className="h-1 w-2"><path d="M0 0h8L4 4z" /></svg></span>
            </button>
          </div>
          <ViewTabs />
        </main>
        <div className="flex w-[200px] shrink-0 pt-px pb-[3px] pl-[7px]"><LayersPanel /></div>
      </div>

      <StatusBar />
      <Taskbar />

      <div className="pointer-events-none absolute right-14 bottom-[72px] w-[206px] whitespace-nowrap text-[#8b8b8b]/60">
        <p className="text-[20px] leading-6">激活 Windows</p>
        <p className="text-[15px] leading-6">转到“设置”以激活 Windows。</p>
      </div>
      <div className="absolute top-[137px] right-0.5 flex h-[57px] w-2 flex-col justify-end overflow-hidden rounded-full bg-[#555]">
        <div className="h-7 bg-[repeating-linear-gradient(#4fc070_0_1px,#555_1px_3px)]" />
      </div>
      <ImeBar />
    </div>
  );
}
